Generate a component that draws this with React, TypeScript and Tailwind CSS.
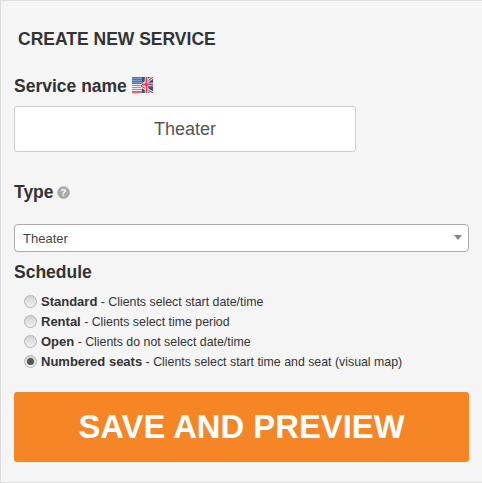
import { ReactNode } from "react";

function Flag() {
  return (
    <svg width="21" height="16" viewBox="0 0 21 16" className="block" aria-hidden="true">
      <rect width="21" height="16" fill="#f3e9ec" />
      <rect width="10" height="7" fill="#4a72ad" />
      <rect x="0" y="8" width="10" height="1" fill="#e8707a" />
      <rect x="0" y="10" width="10" height="1" fill="#e8707a" />
      <rect x="0" y="12" width="10" height="1" fill="#e8707a" />
      <rect x="0" y="14" width="10" height="2" fill="#e8606c" />
      <rect x="0" y="1" width="10" height="1" fill="#7f9bc8" />
      <rect x="0" y="3" width="10" height="1" fill="#7f9bc8" />
      <rect x="0" y="5" width="10" height="1" fill="#7f9bc8" />
      <rect x="10" width="11" height="16" fill="#33508c" />
      <path d="M9 9L21 0M9 9L21 16" stroke="#f4f0f2" strokeWidth="3" />
      <path d="M9 9L21 0M9 9L21 16" stroke="#d9404c" strokeWidth="1.1" />
      <path d="M14.5 0V16M10 7.5H21" stroke="#f4f0f2" strokeWidth="3.4" />
      <path d="M14.5 0V16M10 7.5H21" stroke="#d9404c" strokeWidth="1.8" />
    </svg>
  );
}

function Help() {
  return (
    <svg width="13" height="13" viewBox="0 0 13 13" className="block" aria-hidden="true">
      <circle cx="6.5" cy="6.5" r="6.3" fill="#aaaaaa" />
      <path
        d="M4.2 5C4.3 3.6 5.3 2.8 6.6 2.8C8 2.8 9 3.6 9 4.9C9 5.9 8.4 6.3 7.8 6.7C7.3 7 7.2 7.3 7.2 7.9H5.6C5.6 6.9 6 6.4 6.6 6C7.1 5.7 7.3 5.5 7.3 5C7.3 4.6 7 4.3 6.6 4.3C6.1 4.3 5.8 4.6 5.7 5.2Z"
        fill="#f5f5f5"
      />
      <rect x="5.6" y="8.5" width="1.6" height="1.6" fill="#f5f5f5" />
    </svg>
  );
}

function Radio({ on, children }: { on?: boolean; children: ReactNode }) {
  return (
    <label className="flex h-5 items-center">
      <span className="mr-[4px] flex h-[13px] w-[13px] shrink-0 -translate-y-[1px] items-center justify-center rounded-full border border-[#b5b5b5] bg-gradient-to-b from-[#d2d2d2] to-[#f0f0f0]">
        {on && <span className="h-[7px] w-[7px] rounded-full bg-[#555555]" />}
      </span>
      <span>{children}</span>
    </label>
  );
}

export default function App() {
  return (
    <div className="h-[483px] w-[482px] overflow-hidden border border-r-0 border-[#dddddd] bg-[#f5f5f5] pl-[13px] font-['Liberation_Sans',Arial,sans-serif] text-[#333333]">
      <h1 className="ml-1 mt-[28px] text-[17.5px] leading-[20px] font-bold">CREATE NEW SERVICE</h1>
      <div className="mt-[23px] flex h-[26px] items-center gap-[5px]">
        <span className="translate-y-[1px] text-[17.5px] leading-[26px] font-bold">Service name</span>
        <Flag />
      </div>
      <input
        readOnly
        value="Theater"
        className="mt-[8px] block h-[46px] w-[342px] rounded-[3px] border border-[#cccccc] bg-white text-center text-[18px] text-[#555555] outline-none"
      />
      <div className="mt-[27px] flex h-[26px] items-center gap-[3px]">
        <span className="text-[17.5px] leading-[26px] font-bold">Type</span>
        <Help />
      </div>
      <div className="relative mt-[19px] h-[28px] w-[455px] rounded-[4px] border border-[#aaaaaa] bg-white pl-[8px] text-[13px] leading-[28px] text-[#444444]">
        Theater
        <span className="absolute right-[6px] top-[10px] h-0 w-0 border-x-[4px] border-t-[5px] border-x-transparent border-t-[#888888]" />
      </div>
      <div className="mt-[7px] text-[17.5px] leading-[26px] font-bold">Schedule</div>
      <div className="mt-[6px] pl-[10px] pt-[1px] text-[12.35px]">
        <Radio><b className="text-[13px]">Standard</b> - Clients select start date/time</Radio>
        <Radio><b className="text-[13px]">Rental</b> - Clients select time period</Radio>
        <Radio><b className="text-[13px]">Open</b> - Clients do not select date/time</Radio>
        <Radio on><b className="text-[13px]">Numbered seats</b> - Clients select start time and seat (visual map)</Radio>
      </div>
      <button className="mt-[20px] block h-[70px] w-[455px] rounded-[3px] bg-[#f68525] text-center text-[32.8px] font-bold text-white">
        SAVE AND PREVIEW
      </button>
    </div>
  );
}
